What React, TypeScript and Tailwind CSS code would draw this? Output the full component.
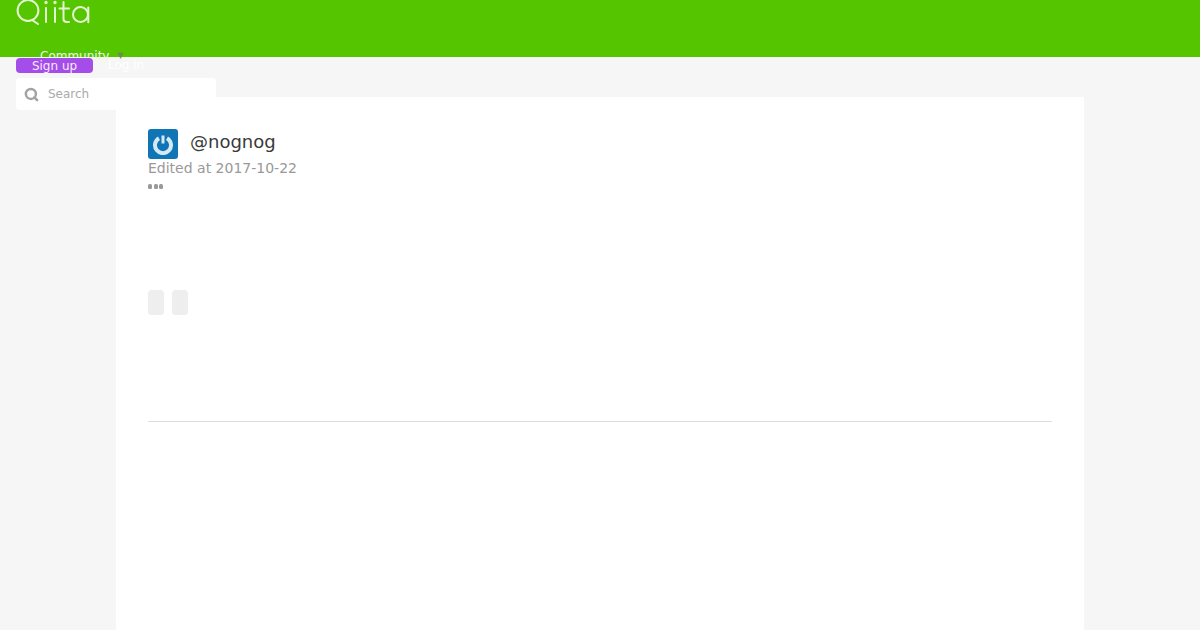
import { Search } from 'lucide-react';

function QiitaLogo() {
  return (
    <svg width="76" height="26" viewBox="0 0 76 26" fill="none" stroke="#e6f6d2" strokeWidth="2" strokeLinecap="round" className="block">
      <circle cx="12" cy="10.5" r="10.4" />
      <path d="M16 20 L22 24" />
      <path d="M30 8 V22" />
      <path d="M39 8 V22" />
      <circle cx="30" cy="2.5" r="0.7" />
      <circle cx="39" cy="2.5" r="0.7" />
      <path d="M47.5 2 V19 Q47.5 22 51 22 H53 M43.5 8.5 H53" />
      <circle cx="64.5" cy="14.5" r="7.5" />
      <path d="M72.3 7.5 V22.3" />
    </svg>
  );
}

function Avatar() {
  return (
    <div className="flex h-[30px] w-[30px] shrink-0 items-center justify-center rounded-[3px] bg-[#0f75b5]">
      <svg width="22" height="22" viewBox="0 0 22 22" fill="none" stroke="#d5e9f3" strokeWidth="4">
        <path d="M7 5.2 A8 8 0 1 0 15 5.2" />
        <path d="M11 2.5 V10.5" strokeWidth="3" />
      </svg>
    </div>
  );
}

export default function App() {
  return (
    <div className="h-[630px] overflow-hidden bg-[#f6f6f6] font-['DejaVu_Sans',sans-serif]">
      <header className="relative z-10 h-[57px] bg-[#55c500] px-4">
        <div className="h-[50px]">
          <QiitaLogo />
        </div>
        <div className="flex h-[11px] items-center pl-6 text-[12px] leading-[16px] text-[#eef9e4]">
          <span>Community</span>
          <span className="ml-2 mt-[1px] text-[8px] text-[#6b8f4a]">▼</span>
        </div>
        <div className="-mt-[3px] flex items-center">
          <a className="flex h-[15px] w-[77px] items-center justify-center rounded-[4px] bg-[#a54de8] text-[12px] text-[#f5e9fd]">Sign up</a>
          <a className="ml-[15px] text-[12px] leading-[15px] text-white">Log in</a>
        </div>
        <div className="mt-[5px] flex h-[32px] w-[200px] items-center rounded-[4px] bg-white px-2">
          <Search size={15} strokeWidth={4} className="text-[#a3a3a3]" />
          <span className="ml-[9px] text-[12px] text-[#aaaaaa]">Search</span>
        </div>
      </header>
      <main className="mx-auto mt-[40px] h-[600px] w-[968px] bg-white p-8">
        <div className="flex items-center">
          <Avatar />
          <span className="ml-3 -mt-1 text-[18px] leading-[30px] text-[#3a3a3a]">@nognog</span>
        </div>
        <div className="text-[14px] leading-[18px] text-[#999999]">Edited at 2017-10-22</div>
        <div className="mt-[7px] flex gap-[1.5px]">
          <span className="h-[5px] w-[4px] rounded-[1.5px] bg-[#999999]" />
          <span className="h-[5px] w-[4px] rounded-[1.5px] bg-[#999999]" />
          <span className="h-[5px] w-[4px] rounded-[1.5px] bg-[#999999]" />
        </div>
        <div className="mt-[101px] flex gap-2">
          <div className="h-[25px] w-4 rounded-[4px] bg-[#eeeeee]" />
          <div className="h-[25px] w-4 rounded-[4px] bg-[#eeeeee]" />
        </div>
        <hr className="mt-[106px] border-t border-[#dddddd]" />
      </main>
    </div>
  );
}
